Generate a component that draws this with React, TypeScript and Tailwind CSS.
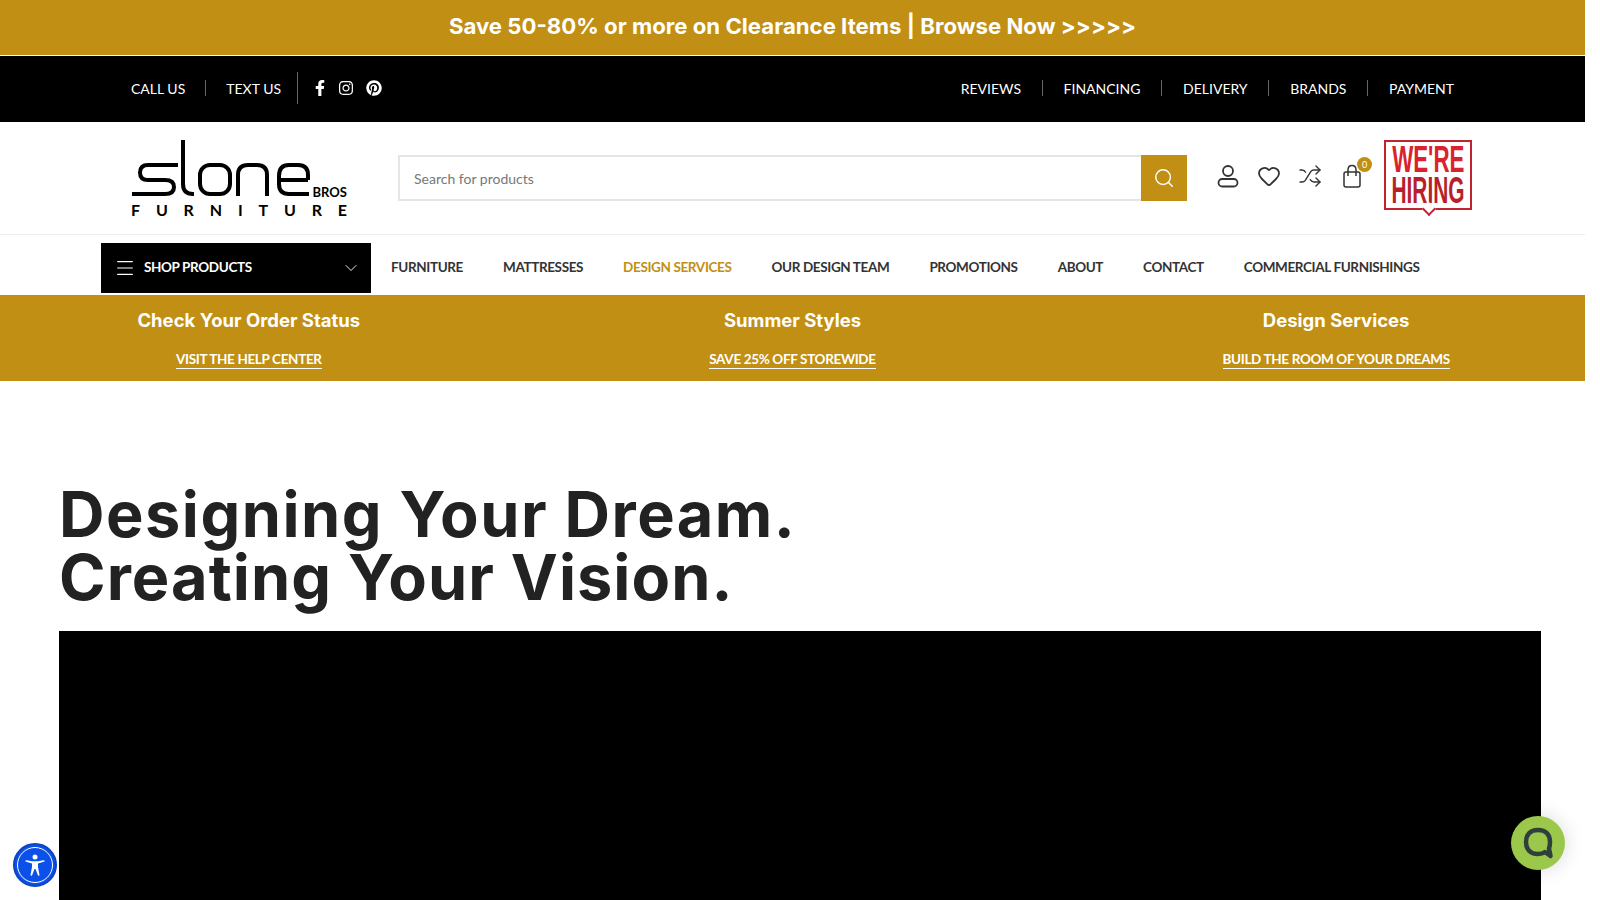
import { Heart, Menu, Search, Shuffle, ChevronDown } from "lucide-react";
import { FaFacebookF, FaInstagram, FaPinterest } from "react-icons/fa";

const leftLinks = ["REVIEWS", "FINANCING", "DELIVERY", "BRANDS", "PAYMENT"];
const navLinks = ["FURNITURE", "MATTRESSES", "DESIGN SERVICES", "OUR DESIGN TEAM", "PROMOTIONS", "ABOUT", "CONTACT", "COMMERCIAL FURNISHINGS"];
const promos = [
  { title: "Check Your Order Status", link: "VISIT THE HELP CENTER" },
  { title: "Summer Styles", link: "SAVE 25% OFF STOREWIDE" },
  { title: "Design Services", link: "BUILD THE ROOM OF YOUR DREAMS" },
];

const Logo = () => (
  <div className="w-[216px] font-['Lato',sans-serif] text-black">
    <div className="relative h-[58px]">
      <svg width="182" height="58" viewBox="0 0 182 58" fill="none" stroke="#000" strokeWidth="4">
        <path d="M1 55H34Q43 55 43 48Q43 41 34 41H17Q9 41 9 33.5Q9 26 17 26H47" />
        <path d="M52 1V45Q52 55 62 55H63" />
        <rect x="69" y="26" width="30" height="29" rx="10" />
        <path d="M107 57V36Q107 26 117 26H126Q136 26 136 36V57" />
        <path d="M177 41H148V37Q148 26 158 26H167Q177 26 177 36V41M148 41V45Q148 55 158 55H178" />
      </svg>
      <span className="absolute right-0 bottom-[-2px] text-[13px] leading-none font-bold">BROS</span>
    </div>
    <div className="mt-[5px] flex justify-between text-[16px] leading-[15px] font-bold">
      {"FURNITURE".split("").map((c, i) => (
        <span key={i}>{c}</span>
      ))}
    </div>
  </div>
);

const UserIcon = () => (
  <svg width="24" height="24" viewBox="0 0 24 24" fill="none" stroke="#333" strokeWidth="1.8">
    <circle cx="12" cy="7" r="5" />
    <rect x="2.5" y="15" width="19" height="7.5" rx="3.7" />
  </svg>
);

const BagIcon = () => (
  <svg width="24" height="24" viewBox="0 0 24 24" fill="none" stroke="#333" strokeWidth="1.5">
    <rect x="4" y="8" width="16" height="15" rx="2" />
    <path d="M8 12V6Q8 1.5 12 1.5Q16 1.5 16 6V12" />
  </svg>
);

export default function App() {
  return (
    <div className="relative h-[900px] w-full overflow-hidden bg-white font-['Lato',sans-serif]">
      <div className="w-[1585px]">
        <div className="flex h-[55px] items-center justify-center bg-[#c18f13] pb-[3px] font-['Inter',sans-serif] text-[22.2px] font-bold text-white">
          Save 50-80% or more on Clearance Items | Browse Now &gt;&gt;&gt;&gt;&gt;
        </div>
        <div className="mt-px flex h-[66px] items-center justify-between bg-black px-[131px] pb-[2px] text-[14px] text-white">
          <div className="flex items-center">
            <span>CALL US</span>
            <span className="mx-[20px] h-[16px] w-px bg-[#666]" />
            <span>TEXT US</span>
            <span className="ml-[16px] h-[32px] w-px bg-[#666]" />
            <div className="ml-[14px] flex items-center gap-[10px] text-[16px]">
              <FaFacebookF />
              <FaInstagram />
              <FaPinterest className="ml-[2px]" />
            </div>
          </div>
          <div className="flex items-center">
            {leftLinks.map((l, i) => (
              <div key={l} className="flex items-center">
                {i > 0 && <span className="mx-[20.8px] h-[16px] w-px bg-[#666]" />}
                <span>{l}</span>
              </div>
            ))}
          </div>
        </div>

        <div className="flex h-[113px] items-center border-b border-[#eee] pl-[131px]">
          <Logo />
          <div className="ml-[51px] flex h-[46px] w-[789px]">
            <div className="flex flex-1 items-center border-2 border-r-0 border-[#e5e5e5] px-[14px] text-[14px] text-[#777]">Search for products</div>
            <div className="flex w-[46px] items-center justify-center bg-[#c18f13]">
              <Search size={22} color="#fff" strokeWidth={1.6} />
            </div>
          </div>
          <div className="mb-[4px] ml-[29px] flex items-center gap-[17px] text-[#333]">
            <UserIcon />
            <Heart size={24} strokeWidth={1.8} />
            <Shuffle size={24} strokeWidth={1.4} />
            <div className="relative ml-px">
              <BagIcon />
              <span className="absolute top-[-7px] right-[-8px] flex h-[15px] w-[15px] items-center justify-center rounded-full bg-[#c18f13] text-[9px] text-white">0</span>
            </div>
          </div>
          <div className="relative mb-[6px] ml-[20px] flex h-[70px] w-[88px] flex-col items-center justify-center border-2 border-[#c2242f] pb-[1px] font-['Liberation_Sans',sans-serif] text-[36px] leading-[31px] font-bold text-[#d9232e]">
            <span className="scale-x-[0.62] whitespace-nowrap">WE'RE</span>
            <span className="scale-x-[0.58] whitespace-nowrap text-[#b81f2b]">HIRING</span>
            <span className="absolute bottom-[-6px] left-[38px] h-[10px] w-[10px] rotate-45 border-r-2 border-b-2 border-[#c2242f] bg-white" />
          </div>
        </div>

        <div className="flex h-[60px] items-start pt-[8px] pl-[101px] text-[13.5px] font-bold tracking-[-0.37px] text-[#333]">
          <div className="flex h-[50px] w-[270px] items-center bg-black pr-[10px] pb-[1px] pl-[13px] text-white">
            <Menu size={22} strokeWidth={1.3} />
            <span className="ml-[8px] flex-1">SHOP PRODUCTS</span>
            <ChevronDown size={20} strokeWidth={1.1} />
          </div>
          <div className="ml-[20px] flex h-[49px] items-center gap-[40px]">
            {navLinks.map((l) => (
              <span key={l} className={l === "DESIGN SERVICES" ? "text-[#c18f13]" : ""}>{l}</span>
            ))}
          </div>
        </div>

        <div className="grid h-[86px] grid-cols-3 gap-[46px] bg-[#c18f13] text-white">
          {promos.map((p) => (
            <div key={p.title} className="flex flex-col items-center">
              <div className="mt-[11px] font-['Inter',sans-serif] text-[18.5px] leading-[28px] font-bold">{p.title}</div>
              <div className="mt-[16px] border-b border-white text-[13.5px] leading-[18px] font-bold tracking-[-0.35px]">{p.link}</div>
            </div>
          ))}
        </div>

        <div className="pt-[102px] pr-[44px] pl-[59px]">
          <h1 className="font-['Inter',sans-serif] text-[63px] leading-[63px] font-bold text-[#222]">
            <span className="block tracking-[1.5px]">Designing Your Dream.</span>
            <span className="block tracking-[1.05px]">Creating Your Vision.</span>
          </h1>
          <div className="mt-[22px] h-[400px] bg-black" />
        </div>
      </div>

      <div className="absolute top-[843px] left-[13px] flex h-[44px] w-[44px] items-center justify-center rounded-full border-[2px] border-[#0b45c4] bg-[#0b50e8]">
        <div className="flex h-[36px] w-[36px] items-center justify-center rounded-full border border-white">
          <svg width="24" height="24" viewBox="0 0 24 24" fill="#fff">
            <circle cx="12" cy="4" r="2.5" />
            <path d="M2.5 8.5 Q2 7 3.5 7.2 L9 8.2 H15 L20.5 7.2 Q22 7 21.5 8.5 L15 10.5 V14 L16.5 22 Q16.5 23 15 22.6 L12.5 16 H11.5 L9 22.6 Q7.5 23 7.5 22 L9 14 V10.5 Z" />
          </svg>
        </div>
      </div>

      <div className="absolute top-[816px] left-[1511px] flex h-[54px] w-[54px] items-center justify-center rounded-full bg-[#9bc84b] shadow-[0_0_20px_rgba(0,0,0,0.15)]">
        <svg width="30" height="32" viewBox="0 0 30 32" fill="none">
          <path d="M15 3C7 3 3 8 3 15C3 22 7 27 15 27C18 27 20 26.5 22 25L27.5 29L26 21.5C27 19.5 27 17.5 27 15C27 8 23 3 15 3Z" stroke="#2f3f3c" strokeWidth="4.5" strokeLinejoin="round" />
        </svg>
      </div>
    </div>
  );
}
